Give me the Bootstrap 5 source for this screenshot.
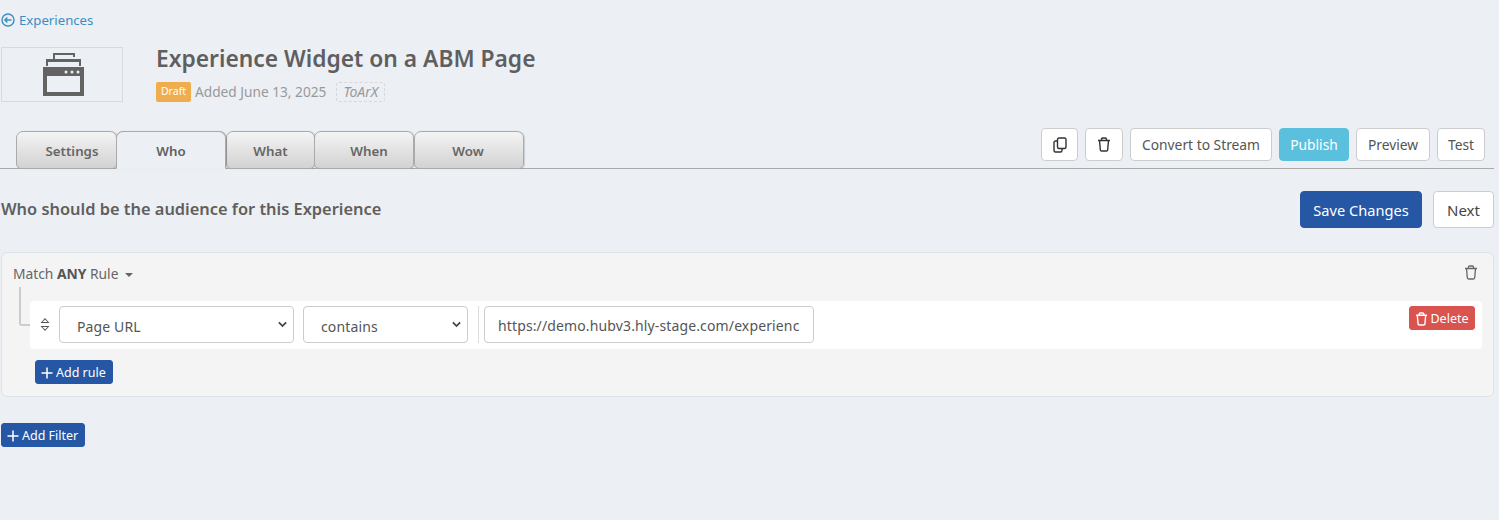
<!DOCTYPE html>
<html lang="en"><head><meta charset="utf-8"><title>Experience</title>
<link href="https://cdn.jsdelivr.net/npm/bootstrap@5.3.0/dist/css/bootstrap.min.css" rel="stylesheet">
<style>
html,body{height:100%}
body{background:#eceff4;font-family:"Noto Sans",sans-serif;font-size:14px;color:#555;overflow:hidden}
.pg{width:1493px;margin-left:1px;padding-top:11px}
.back{color:#3b8ec2;text-decoration:none;font-size:13.2px;line-height:17px;gap:4px}
.hdr{margin-top:15px;height:55px}
.thumb{width:122px;height:55px;border:1px solid #d6d9dd;margin-right:33px;padding-left:3px}
.ttl{font-size:22.8px;font-weight:600;line-height:26px;margin:-1px 0 0;color:#5f5f5f}
.meta{margin-top:10px;height:20px}
.draft{background:#f0ad4e;color:#fff;font-size:10.5px;border-radius:2px;width:35px;height:20px;margin-right:4px}
.added{color:#999;font-size:13.7px}
.who{border:1px dashed #d6d8dc;border-radius:3px;color:#999;font-style:italic;font-size:14px;padding:0 6px;margin-left:10px;height:20px;line-height:18px}
.tabrow{margin-top:26px;height:41px;border-bottom:1px solid #aaa;margin-left:-1px;padding-left:16px}
.tabz{align-items:flex-end}
.tb{height:38px;margin-bottom:-1px;border:1px solid #aaa;border-radius:7px 7px 5px 5px;background:linear-gradient(#f4f4f4,#d2d2d2);font-weight:600;font-size:13.3px;color:#666;line-height:38px;text-align:center;box-shadow:1px 0 1px rgba(0,0,0,.15)}
.tb.on{background:#eceff4;border-bottom:1px solid #eceff4;border-radius:7px 7px 0 0;position:relative;z-index:2;margin-left:-1px;color:#5f5f5f}
.t1{width:101px;padding-left:11px}.t2{width:110px}.t3{width:89px}.t4{width:100px;margin-left:-1px;padding-left:10px}.t5{width:110px;padding-right:2px}
.acts{gap:7px;margin-right:9px;margin-bottom:7px;align-self:flex-end}
.bw{background:#fff;border:1px solid #ccc;border-radius:4px;color:#555;font-size:13.8px;height:33px;padding:2px 0 0;display:inline-flex;align-items:center;justify-content:center}
.w37{width:37px}.w38{width:38px}.w142{width:142px}.w70{width:70px}.w74{width:74px}.w48{width:48px}
.bw.w37,.bw.w38{padding-top:0}
.pub{background:#5bc0de;border-color:#5bc0de;color:#fff}
.subhd{margin-top:22px;height:37px}
.subhd h2{font-size:16.4px;font-weight:600;margin:-2px 0 0;color:#5f5f5f}
.save{background:#2557a5;border:1px solid #2557a5;color:#fff;height:37px;width:122px;border-radius:4px;font-size:14.6px;padding:2px 0 0;margin-right:11px}
.nx{height:37px;width:61px;font-size:15px;color:#444}
.ruleset{margin-top:24px;height:145px;background:#f4f4f5;border:1px solid #dfe2e6;border-radius:6px;padding:11px 11px 0 11px}
.rshd{height:21px;font-size:13.8px;color:#666;line-height:20px}
.rshd b{font-weight:700;color:#555}
.rshd svg{margin:1px 4px 0 0}
.caret{display:inline-block;border:4px solid transparent;border-top-color:#666;border-bottom:0;margin-left:3px;vertical-align:2px}
.conn{position:absolute;left:-11px;top:-14px;width:11px;height:39px;border-left:2px solid #ccc;border-bottom:2px solid #ccc;border-radius:0 0 0 3px}
.rrow{position:relative;margin:16px 0 0 17px;height:48px;width:1452px;background:#fff;border-radius:4px;padding:0 0 1px 7px}
.grip{width:15px;margin-right:7px}
.sel{height:37px;font-size:14px;letter-spacing:.13px;color:#555;border:1px solid #ccc;border-radius:4px;padding:3px 30px 0 17px;font-family:inherit;background-image:url("data:image/svg+xml,%3Csvg xmlns='http://www.w3.org/2000/svg' viewBox='0 0 10 7'%3E%3Cpath d='M1 1.200 5 5.200 9 1.200' fill='none' stroke='%23444' stroke-width='2'/%3E%3C/svg%3E");background-size:9px 7px;background-position:right 6px center;box-shadow:none}
.s1{width:235px;margin-right:9px}.s2{width:165px;margin-right:10px}
.vd{width:1px;height:37px;background:#ddd;margin-right:5px}
.inp{width:330px;height:37px;border:1px solid #ccc;border-radius:4px;font-size:14px;letter-spacing:.13px;color:#555;padding:2px 13px 0;box-shadow:none}
.del{position:absolute;right:7px;top:5px;height:24px;width:66px;background:#d9534f;border:1px solid #d9534f;color:#fff;font-size:12.5px;border-radius:3px;padding:2px 0 0;gap:2px}
.addb{background:#2557a5;border:1px solid #2557a5;color:#fff;height:24px;border-radius:3px;font-size:12.5px;padding:2px 5px 0;gap:3px}
.ar{margin:11px 0 0 22px;width:78px}
.af{margin-top:26px;width:84px}
</style></head><body>
<div class="pg">
<a href="#" class="back d-inline-flex align-items-center"><svg width="14" height="14" viewBox="0 0 14 14" fill="none" stroke="#3b8ec2" stroke-width="1.4"><circle cx="7" cy="7" r="6"/><path d="M10.500 7H3.800M6.400 4.400 3.800 7l2.600 2.600"/></svg>Experiences</a>
<div class="hdr d-flex">
<div class="thumb d-flex align-items-center justify-content-center"><svg width="41" height="43" viewBox="0 0 41 43" fill="#636363"><path d="M10 0h22v4H30V2H12V6H10z"/><path d="M3 6h35v7H36V9H5V13H3z"/><path fill-rule="evenodd" d="M0 14h41v29H0zM4 23v16h33V23z"/><circle cx="23" cy="19" r="1.500" fill="#eceff4"/><circle cx="29" cy="19" r="1.500" fill="#eceff4"/><circle cx="35" cy="19" r="1.500" fill="#eceff4"/></svg></div>
<div><h1 class="ttl">Experience Widget on a ABM Page</h1>
<div class="meta d-flex align-items-center"><span class="draft d-inline-flex align-items-center justify-content-center">Draft</span><span class="added">Added June 13, 2025</span><span class="who">ToArX</span></div></div>
</div>
<div class="tabrow d-flex justify-content-between">
<div class="tabz d-flex">
<div class="tb t1">Settings</div><div class="tb on t2">Who</div><div class="tb t3">What</div><div class="tb t4">When</div><div class="tb t5">Wow</div>
</div>
<div class="acts d-flex">
<button class="bw w37" aria-label="Copy"><svg width="14" height="16" viewBox="0 0 14 16" fill="none" stroke="#333" stroke-width="1.400"><rect x="4.500" y="1" width="8.500" height="10.500" rx="1.500"/><path d="M4.500 4H2.500A1.500 1.500 0 0 0 1 5.500v8A1.500 1.500 0 0 0 2.500 15h5A1.500 1.500 0 0 0 9 13.500V11.500"/></svg></button>
<button class="bw w38" aria-label="Delete"><svg width="14" height="15" viewBox="0 0 14 15" fill="none" stroke="#333" stroke-width="1.400"><path d="M1 3.500h12M4.500 3.500V2.200Q4.500 1 5.700 1h2.600Q9.500 1 9.500 2.200v1.300M2.500 3.500l.8 9.300Q3.400 14 4.600 14h4.800q1.200 0 1.300-1.200l.8-9.300"/></svg></button>
<button class="bw w142">Convert to Stream</button>
<button class="bw pub w70">Publish</button>
<button class="bw w74">Preview</button>
<button class="bw w48">Test</button>
</div>
</div>
<div class="subhd d-flex justify-content-between align-items-center">
<h2>Who should be the audience for this Experience</h2>
<div class="d-flex"><button class="btn save">Save Changes</button><button class="bw nx">Next</button></div>
</div>
<div class="ruleset position-relative">
<div class="rshd d-flex justify-content-between"><span>Match <b>ANY</b> Rule <i class="caret"></i></span><svg width="14" height="15" viewBox="0 0 14 15" fill="none" stroke="#666" stroke-width="1.300"><path d="M1 3.500h12M4.500 3.500V2.200Q4.500 1 5.700 1h2.600Q9.500 1 9.500 2.200v1.300M2.500 3.500l.8 9.300Q3.400 14 4.600 14h4.800q1.200 0 1.300-1.200l.8-9.300"/></svg></div>
<div class="rrow d-flex align-items-center">
<span class="conn"></span>
<span class="grip d-flex justify-content-center"><svg width="10" height="13" viewBox="0 0 10 13" fill="#555"><path d="M5 0 9.500 5H.5zM2.500 4h5L5 1.500z" fill-rule="evenodd"/><path d="M.5 8h9L5 13zM2.500 9 5 11.500 7.500 9z" fill-rule="evenodd"/></svg></span>
<select class="form-select sel s1"><option>Page URL</option></select>
<select class="form-select sel s2"><option>contains</option></select>
<span class="vd"></span>
<input class="form-control inp" value="https://demo.hubv3.hly-stage.com/experiences">
<button class="btn del d-inline-flex align-items-center justify-content-center"><svg width="13" height="14" viewBox="0 0 14 15" fill="none" stroke="#fff" stroke-width="1.500"><path d="M1 3.500h12M4.500 3.500V2.200Q4.500 1 5.700 1h2.600Q9.500 1 9.500 2.200v1.300M2.500 3.500l.8 9.300Q3.400 14 4.600 14h4.800q1.200 0 1.300-1.200l.8-9.300"/></svg>Delete</button>
</div>
<button class="btn addb ar d-flex align-items-center"><svg width="12" height="12" viewBox="0 0 12 12" stroke="#fff" stroke-width="1.500"><path d="M6 .5v11M.5 6h11"/></svg>Add rule</button>
</div>
<button class="btn addb af d-flex align-items-center"><svg width="12" height="12" viewBox="0 0 12 12" stroke="#fff" stroke-width="1.500"><path d="M6 .5v11M.5 6h11"/></svg>Add Filter</button>
</div>
<script src="https://cdn.jsdelivr.net/npm/bootstrap@5.3.0/dist/js/bootstrap.bundle.min.js"></script>
</body></html>
